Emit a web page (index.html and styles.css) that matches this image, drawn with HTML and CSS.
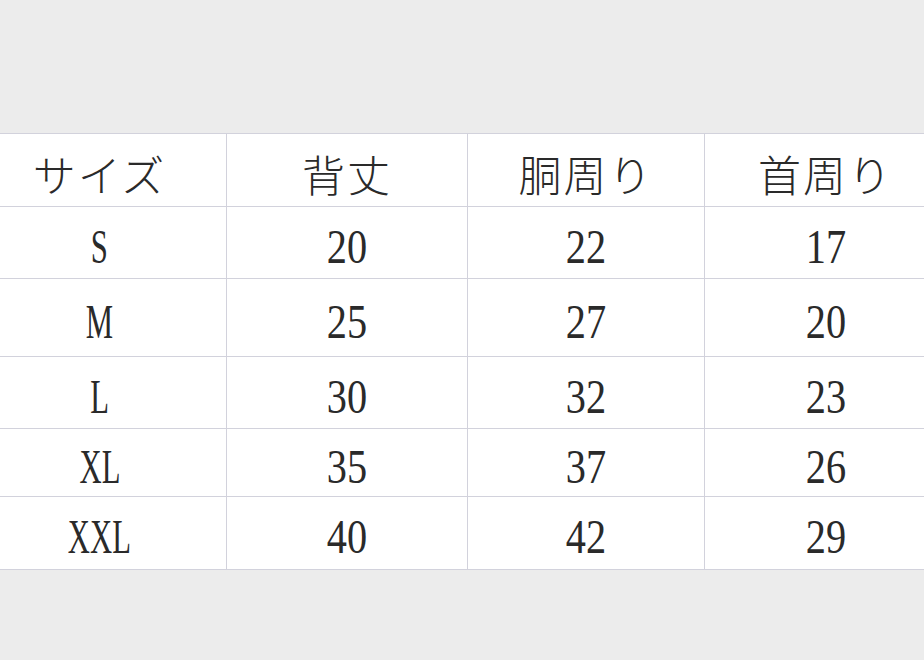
FILE: index.html
```html
<!DOCTYPE html>
<html lang="ja">
<head>
<meta charset="utf-8">
<title>サイズ表</title>
<link rel="stylesheet" href="styles.css">
</head>
<body>
<div class="page">
  <div class="size-table">
    <div class="cell head"><span>サイズ</span></div>
    <div class="cell head"><span>背丈</span></div>
    <div class="cell head"><span>胴周り</span></div>
    <div class="cell head"><span>首周り</span></div>

    <div class="cell"><span class="lbl">S</span></div>
    <div class="cell"><span class="num">20</span></div>
    <div class="cell"><span class="num">22</span></div>
    <div class="cell"><span class="num">17</span></div>

    <div class="cell"><span class="lbl">M</span></div>
    <div class="cell"><span class="num">25</span></div>
    <div class="cell"><span class="num">27</span></div>
    <div class="cell"><span class="num">20</span></div>

    <div class="cell"><span class="lbl">L</span></div>
    <div class="cell"><span class="num">30</span></div>
    <div class="cell"><span class="num">32</span></div>
    <div class="cell"><span class="num">23</span></div>

    <div class="cell"><span class="lbl">XL</span></div>
    <div class="cell"><span class="num">35</span></div>
    <div class="cell"><span class="num">37</span></div>
    <div class="cell"><span class="num">26</span></div>

    <div class="cell"><span class="lbl">XXL</span></div>
    <div class="cell"><span class="num">40</span></div>
    <div class="cell"><span class="num">42</span></div>
    <div class="cell"><span class="num">29</span></div>
  </div>
</div>
</body>
</html>
```
FILE: styles.css
```css
html, body {
  margin: 0;
  padding: 0;
  background: #ececec;
  overflow: hidden;
}
.page {
  width: 924px;
  height: 660px;
  padding-top: 133px;
  box-sizing: border-box;
  overflow: hidden;
}
.size-table {
  display: grid;
  grid-template-columns: 254px 241px 237px 242px;
  grid-template-rows: 73px 72px 78px 72px 68px 73px;
  margin-left: -27px;
  width: 974px;
  background: #fff;
  border-top: 1px solid #d2d2dc;
  color: #2a2a2a;
}
.cell {
  box-sizing: border-box;
  border-right: 1px solid #d2d2dc;
  border-bottom: 1px solid #d2d2dc;
  display: flex;
  align-items: center;
  justify-content: center;
  font-family: "Liberation Serif", "Noto Sans CJK JP", serif;
  font-size: 48px;
  line-height: 1;
  padding-top: 8px;
}
.head {
  font-family: "Noto Sans CJK JP", sans-serif;
  font-size: 43px;
  font-weight: 300;
  letter-spacing: 2px;
  padding-top: 6px;
}
.num {
  display: inline-block;
  transform: scaleX(0.84);
}
.lbl {
  display: inline-block;
  transform: scaleX(0.64);
}
```
